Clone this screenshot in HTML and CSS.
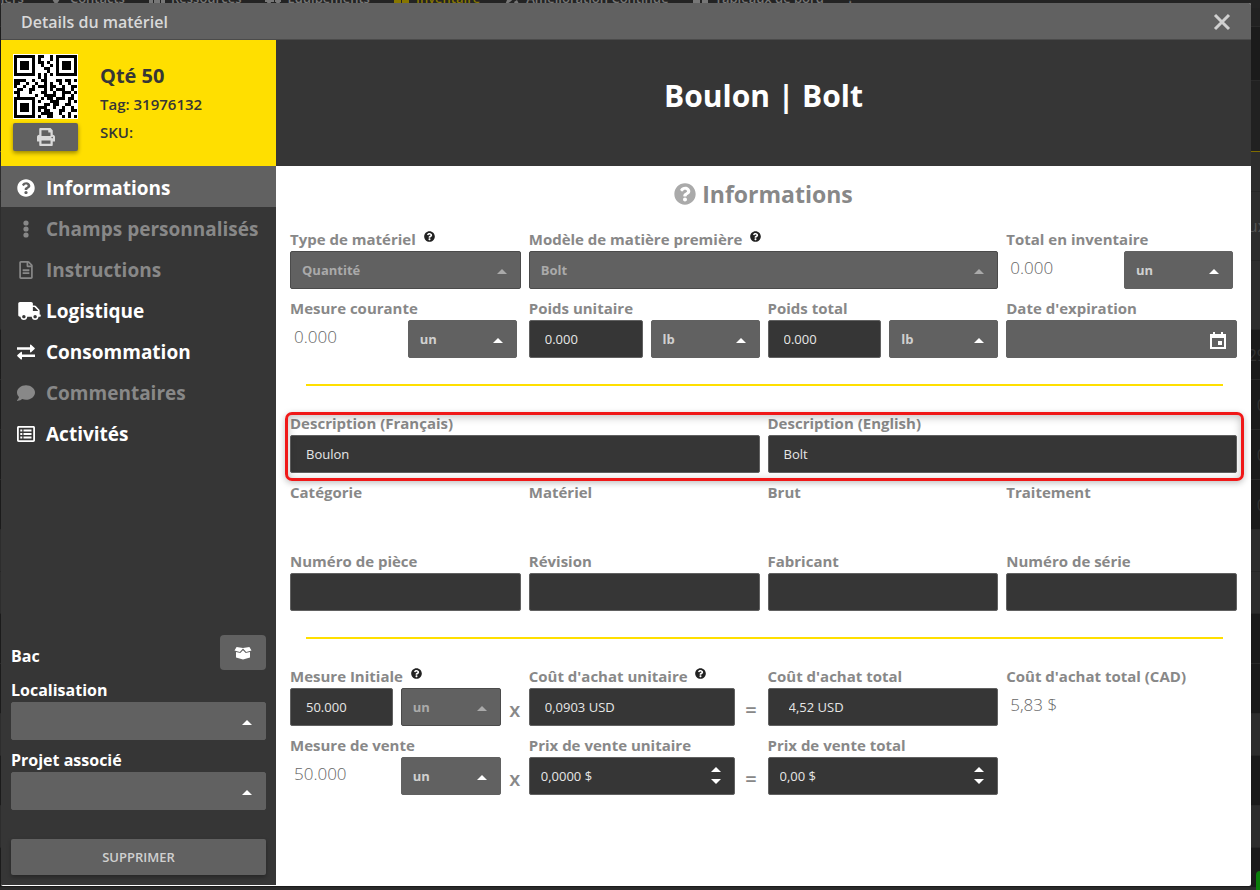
FILE: index.html
```html
<!DOCTYPE html>
<html lang="fr">

<head>
    <meta charset="UTF-8">
    <meta name="viewport" content="width=device-width, initial-scale=1.0">
    <title>Details du matériel</title>
    <link rel="stylesheet" href="styles.css">
</head>

<body>
    <!-- shared icons -->
    <svg class="sprite" aria-hidden="true">
        <symbol id="i-help" viewBox="0 0 512 512">
            <path d="M504 256c0 136.997-111.043 248-248 248S8 392.997 8 256C8 119.083 119.043 8 256 8s248 111.083 248 248zM262.655 90c-54.497 0-89.255 22.957-116.549 63.758-3.536 5.286-2.353 12.415 2.715 16.258l34.699 26.31c5.205 3.947 12.621 3.008 16.665-2.122 17.864-22.658 30.113-35.797 57.303-35.797 20.429 0 45.698 13.148 45.698 32.958 0 14.976-12.363 22.667-32.534 33.976C247.128 238.528 216 254.941 216 296v4c0 6.627 5.373 12 12 12h56c6.627 0 12-5.373 12-12v-1.333c0-28.462 83.186-29.647 83.186-106.667 0-58.002-60.165-102-116.531-102zM256 338c-25.365 0-46 20.635-46 46 0 25.364 20.635 46 46 46s46-20.636 46-46c0-25.365-20.635-46-46-46z" />
        </symbol>
        <symbol id="i-print" viewBox="0 0 512 512">
            <path d="M448 192V77.25c0-8.49-3.37-16.62-9.37-22.63L393.37 9.37c-6-6-14.14-9.37-22.63-9.37H96C78.33 0 64 14.33 64 32v160c-35.35 0-64 28.65-64 64v112c0 8.84 7.16 16 16 16h48v96c0 17.67 14.33 32 32 32h320c17.67 0 32-14.33 32-32v-96h48c8.84 0 16-7.16 16-16V256c0-35.35-28.65-64-64-64zm-64 256H128v-96h256v96zm0-224H128V64h192v48c0 8.84 7.16 16 16 16h48v96zm48 72c-13.25 0-24-10.75-24-24 0-13.26 10.75-24 24-24s24 10.74 24 24c0 13.25-10.75 24-24 24z" />
        </symbol>
    </svg>

    <div class="page" aria-hidden="true">
        <div class="topnav">
            <span>Ateliers</span>
            <span><svg viewBox="0 0 16 14"><path d="M3 4a5 5 0 0 1 10 0c0 4-5 10-5 10S3 8 3 4z" /></svg>Contacts</span>
            <span><svg viewBox="0 0 16 14"><circle cx="8" cy="4" r="3" /><circle cx="3" cy="6" r="2" /><circle cx="13" cy="6" r="2" /><path d="M0 14V9h4v5zM5 14V8h6v6zM12 14V9h4v5z" /></svg>Ressources</span>
            <span><svg viewBox="0 0 16 14"><path d="M0 3h9v8H0zM10 6h4l2 3v2h-6z" /><circle cx="4" cy="12" r="2" /><circle cx="13" cy="12" r="2" /></svg>Équipements</span>
            <span class="current"><svg viewBox="0 0 16 14"><path d="M4 0h8v6H4zM0 7h7v7H0zM8 7h7v7H8z" /></svg>Inventaire</span>
            <span><svg viewBox="0 0 16 14"><path d="M12 0l3 3-9 8-5 3 2-5zM10 11l3-2 2 4h-4z" /></svg>Amélioration Continue</span>
            <span><svg viewBox="0 0 16 14"><path d="M0 7h7v7H0zM9 4h6v10H9zM0 1h7v4H0z" /></svg>Tableaux de bord</span>
            <span>?</span>
        </div>
        <div class="band h19"></div>
        <div class="band dark h54"></div>
        <div class="band h71 yellow-line"></div>
        <div class="band light h40"></div>
        <div class="band light h69">ux</div>
        <div class="band light h69"></div>
        <div class="band dark h50">29</div>
        <div class="band dark h50">0</div>
        <div class="band dark h50">0</div>
        <div class="band dark h50">0</div>
        <div class="band light h42"></div>
        <div class="band light h42"></div>
        <div class="band dark h50"></div>
        <div class="band dark h50"></div>
        <div class="band light h42"></div>
        <div class="band dark h50"></div>
        <div class="band light h42"></div>
        <div class="band dark h40"></div>
        <div class="badge"></div>
    </div>

    <div class="modal" role="dialog" aria-labelledby="modalTitle">
        <header class="modal-header">
            <span id="modalTitle">Details du matériel</span>
            <button class="close" type="button" aria-label="Fermer">
                <svg viewBox="0 0 18 18"><path d="M2 2l14 14M16 2L2 16" /></svg>
            </button>
        </header>

        <div class="modal-body">
            <aside class="sidebar">
                <div class="summary">
                    <div class="code">
                        <svg class="qr" viewBox="-0.333 -0.333 21.666 21.666" role="img" aria-label="QR 31976132" shape-rendering="crispEdges">
                            <path class="qr-bg" d="M-1-1h23v23h-23z" />
                            <!-- finders -->
                            <path fill-rule="evenodd" d="M0 0h7v7H0zM1 1v5h5V1zM2 2h3v3H2zM14 0h7v7h-7zM15 1v5h5V1zM16 2h3v3h-3zM0 14h7v7H0zM1 15v5h5v-5zM2 16h3v3H2z" />
                            <path class="qr-rows" d="M8 .5h2m2 0h1M8 1.5h1m3 0h1M8 2.5h2m1 0h1M9 3.5h1m2 0h1M10 4.5h2M11 5.5h1M8 6.5h1m1 0h1m1 0h1M8 7.5h1m1 0h1
                            M0 8.5h4m2 0h1m2 0h2m3 0h2m1 0h2m1 0h1M0 9.5h2m2 0h1m2 0h1m2 0h1m1 0h1m2 0h1m2 0h1M0 10.5h1m2 0h1m2 0h1m1 0h3m1 0h2m2 0h1m2 0h2
                            M1 11.5h2m2 0h2m3 0h1m1 0h1m1 0h3m2 0h1M0 12.5h2m3 0h1m3 0h2m2 0h1m2 0h3m1 0h1M1 13.5h1m5 0h1m2 0h4m2 0h1m2 0h1
                            M9 14.5h1m1 0h2m1 0h3m1 0h2M8 15.5h1m3 0h3m3 0h1m1 0h1M10 16.5h2m1 0h2m2 0h2M8 17.5h3m2 0h1m2 0h1m2 0h1M8 18.5h1m1 0h2m3 0h2m2 0h2
                            M9 19.5h4m2 0h1m2 0h1M8 20.5h1m2 0h2m3 0h1m1 0h1m1 0h1" />
                        </svg>
                        <button class="print" type="button" aria-label="Imprimer"><svg><use href="#i-print" /></svg></button>
                    </div>
                    <div class="summary-text">
                        <strong>Qté 50</strong>
                        <span>Tag: 31976132</span>
                        <span>SKU:</span>
                    </div>
                </div>

                <nav class="menu">
                    <a class="active" href="#informations"><svg><use href="#i-help" /></svg>Informations</a>
                    <a class="muted" href="#champs"><svg viewBox="0 0 18 18"><circle cx="9" cy="3" r="2.6" /><circle cx="9" cy="9" r="2.6" /><circle cx="9" cy="15" r="2.6" /></svg>Champs personnalisés</a>
                    <a class="muted" href="#instructions"><svg viewBox="-64 0 512 512"><path d="M288 248v28c0 6.600-5.400 12-12 12H108c-6.600 0-12-5.400-12-12v-28c0-6.600 5.400-12 12-12h168c6.600 0 12 5.400 12 12zm-12 72H108c-6.600 0-12 5.400-12 12v28c0 6.600 5.400 12 12 12h168c6.600 0 12-5.400 12-12v-28c0-6.600-5.400-12-12-12zm108-188.100V464c0 26.500-21.500 48-48 48H48c-26.500 0-48-21.500-48-48V48C0 21.500 21.500 0 48 0h204.100C264.800 0 277 5.100 286 14.100L369.900 98c9 8.900 14.100 21.200 14.100 33.900zm-128-80V128h76.100L256 51.900zM336 464V176H232c-13.300 0-24-10.700-24-24V48H48v416h288z" /></svg>Instructions</a>
                    <a href="#logistique"><svg class="wide" viewBox="0 0 640 512"><path d="M624 352h-16V243.900c0-12.700-5.100-24.900-14.100-33.900L494 110.100c-9-9-21.200-14.100-33.900-14.100H416V48c0-26.500-21.500-48-48-48H48C21.500 0 0 21.500 0 48v320c0 26.500 21.500 48 48 48h16c0 53 43 96 96 96s96-43 96-96h128c0 53 43 96 96 96s96-43 96-96h48c8.800 0 16-7.200 16-16v-32c0-8.800-7.200-16-16-16zM160 464c-26.500 0-48-21.500-48-48s21.500-48 48-48 48 21.500 48 48-21.500 48-48 48zm320 0c-26.500 0-48-21.500-48-48s21.500-48 48-48 48 21.500 48 48-21.500 48-48 48zm80-208H416V144h44.100l99.900 99.900V256z" /></svg>Logistique</a>
                    <a href="#consommation"><svg viewBox="0 0 18 18"><path d="M0 4.200h13V2.300c0-.6.700-.9 1.100-.5l3.500 3.100c.4.400.4.900 0 1.200l-3.500 3.100c-.4.400-1.100.1-1.100-.5V6.700H0zM18 11.400H5V9.500c0-.6-.7-.9-1.100-.5L.4 12.100c-.4.400-.4.900 0 1.200l3.500 3.100c.4.400 1.100.1 1.100-.5v-2h13z" /></svg>Consommation</a>
                    <a class="muted" href="#commentaires"><svg viewBox="0 0 512 512"><path d="M256 32C114.600 32 0 125.100 0 240c0 49.600 21.400 95 57 130.700C44.500 421.100 2.700 466 2.200 466.500c-2.200 2.300-2.800 5.700-1.500 8.700S4.800 480 8 480c66.300 0 116-31.800 140.600-51.400 32.700 12.300 69 19.400 107.400 19.400 141.400 0 256-93.100 256-208S397.400 32 256 32z" /></svg>Commentaires</a>
                    <a href="#activites"><svg viewBox="0 0 18 18"><path fill-rule="evenodd" d="M1.700 1h14.600c1 0 1.700.7 1.700 1.700v12.600c0 1-.7 1.700-1.700 1.700H1.700C.7 17 0 16.300 0 15.300V2.700C0 1.700.7 1 1.700 1zM1.800 2.800v12.400h14.400V2.800zM3.300 4.500h2v2h-2zM6.500 4.500h8v2h-8zM3.300 8h2v2h-2zM6.500 8h8v2h-8zM3.300 11.500h2v2h-2zM6.500 11.500h8v2h-8z" /></svg>Activités</a>
                </nav>

                <div class="location">
                    <div class="bin">
                        <span>Bac</span>
                        <button type="button" aria-label="Choisir un bac">
                            <svg viewBox="0 0 18 14"><path d="M2.600 1L9 2l6.400-1L17.500 4.500 12.200 6 9 2.600 5.800 6 .5 4.500zM2 6l4.300 1.100L9 4.300l2.700 2.800L16 6v5.400L9 13.500 2 11.400z" /></svg>
                        </button>
                    </div>
                    <label for="localisation">Localisation</label>
                    <div class="select"><select id="localisation"><option></option></select></div>
                    <label for="projet">Projet associé</label>
                    <div class="select"><select id="projet"><option></option></select></div>
                    <button class="delete" type="button">SUPPRIMER</button>
                </div>
            </aside>

            <main class="content">
                <div class="banner">
                    <h1>Boulon | Bolt</h1>
                </div>
                <h2><svg><use href="#i-help" /></svg>Informations</h2>

                <form class="form">
                    <div class="grid">
                        <div class="field">
                            <label for="type">Type de matériel <svg class="hint"><use href="#i-help" /></svg></label>
                            <div class="select"><select id="type" disabled><option>Quantité</option></select></div>
                        </div>
                        <div class="field span2">
                            <label for="modele">Modèle de matière première <svg class="hint"><use href="#i-help" /></svg></label>
                            <div class="select"><select id="modele" disabled><option>Bolt</option></select></div>
                        </div>
                        <div class="field">
                            <label for="totalUnit">Total en inventaire</label>
                            <div class="pair inset">
                                <span class="value">0.000</span>
                                <div class="select"><select id="totalUnit"><option>un</option></select></div>
                            </div>
                        </div>

                        <div class="field">
                            <label for="courantUnit">Mesure courante</label>
                            <div class="pair inset">
                                <span class="value">0.000</span>
                                <div class="select"><select id="courantUnit"><option>un</option></select></div>
                            </div>
                        </div>
                        <div class="field">
                            <label for="poids">Poids unitaire</label>
                            <div class="pair">
                                <input id="poids" type="text" value="0.000">
                                <div class="select"><select aria-label="Unité du poids"><option>lb</option></select></div>
                            </div>
                        </div>
                        <div class="field">
                            <label for="poidsTotal">Poids total</label>
                            <div class="pair">
                                <input id="poidsTotal" type="text" value="0.000">
                                <div class="select"><select aria-label="Unité du poids total"><option>lb</option></select></div>
                            </div>
                        </div>
                        <div class="field">
                            <label for="expiration">Date d'expiration</label>
                            <div class="date">
                                <input id="expiration" type="text">
                                <svg viewBox="0 0 16 17"><path fill-rule="evenodd" d="M3 0h2v2h6V0h2v2h3v15H0V2h3zM2 6v9h12V6zM8 9h4v4H8z" /></svg>
                            </div>
                        </div>
                    </div>

                    <hr>

                    <div class="grid">
                        <div class="highlight">
                            <div class="field">
                                <label for="descFr">Description (Français)</label>
                                <input id="descFr" type="text" value="Boulon">
                            </div>
                            <div class="field">
                                <label for="descEn">Description (English)</label>
                                <input id="descEn" type="text" value="Bolt">
                            </div>
                        </div>

                        <div class="field empty"><span>Catégorie</span></div>
                        <div class="field empty"><span>Matériel</span></div>
                        <div class="field empty"><span>Brut</span></div>
                        <div class="field empty"><span>Traitement</span></div>

                        <div class="field">
                            <label for="piece">Numéro de pièce</label>
                            <input id="piece" type="text">
                        </div>
                        <div class="field">
                            <label for="revision">Révision</label>
                            <input id="revision" type="text">
                        </div>
                        <div class="field">
                            <label for="fabricant">Fabricant</label>
                            <input id="fabricant" type="text">
                        </div>
                        <div class="field">
                            <label for="serie">Numéro de série</label>
                            <input id="serie" type="text">
                        </div>
                    </div>

                    <hr>

                    <div class="grid">
                        <div class="field">
                            <label for="initiale">Mesure Initiale <svg class="hint"><use href="#i-help" /></svg></label>
                            <div class="pair short">
                                <input id="initiale" type="text" value="50.000">
                                <div class="select"><select aria-label="Unité initiale" disabled><option>un</option></select></div>
                                <span class="times">x</span>
                            </div>
                        </div>
                        <div class="field">
                            <label for="achat">Coût d'achat unitaire <svg class="hint"><use href="#i-help" /></svg></label>
                            <div class="pair">
                                <input id="achat" type="text" value="0,0903 USD">
                                <span class="equals">=</span>
                            </div>
                        </div>
                        <div class="field">
                            <label for="achatTotal">Coût d'achat total</label>
                            <input id="achatTotal" class="indent" type="text" value="4,52 USD">
                        </div>
                        <div class="field">
                            <span>Coût d'achat total (CAD)</span>
                            <span class="value">5,83 $</span>
                        </div>

                        <div class="field">
                            <label for="venteUnit">Mesure de vente</label>
                            <div class="pair short">
                                <span class="value">50.000</span>
                                <div class="select"><select id="venteUnit"><option>un</option></select></div>
                                <span class="times">x</span>
                            </div>
                        </div>
                        <div class="field">
                            <label for="vente">Prix de vente unitaire</label>
                            <div class="pair">
                                <div class="spin"><input id="vente" type="text" value="0,0000 $"></div>
                                <span class="equals">=</span>
                            </div>
                        </div>
                        <div class="field">
                            <label for="venteTotal">Prix de vente total</label>
                            <div class="spin"><input id="venteTotal" type="text" value="0,00 $"></div>
                        </div>
                    </div>
                </form>
            </main>
        </div>
    </div>
</body>

</html>
```
FILE: styles.css
```css
* {
    box-sizing: border-box;
}

body {
    margin: 0;
    background-color: #2b2b2b;
    color: #888;
    font-family: "Open Sans", "Noto Sans", sans-serif;
    font-size: 15px;
}

button,
input,
select {
    font-family: inherit;
    margin: 0;
}

svg {
    fill: currentColor;
    flex: none;
}

.sprite {
    display: none;
}

/* page behind the dialog */
.page {
    position: fixed;
    inset: 0;
    overflow: hidden;
}

.topnav {
    display: flex;
    gap: 24px;
    height: 20px;
    margin-top: -12px;
    margin-left: -24px;
    line-height: 20px;
    font-size: 13px;
    font-weight: 600;
    white-space: nowrap;
    background-color: #232323;
    color: #777;
}

.topnav span {
    display: flex;
    align-items: center;
    gap: 6px;
}

.topnav svg {
    width: 16px;
    height: 14px;
}

.topnav .current {
    color: #877600;
}

.band {
    display: flex;
    align-items: center;
    justify-content: flex-end;
    margin-right: -6px;
    background-color: #212121;
    border-bottom: 1px solid #292929;
    color: #333;
    font-size: 16px;
}

.band.dark {
    background-color: #1b1b1b;
}

.band.light {
    background-color: #2d2d2d;
    border-color: #262626;
    color: #555;
}

.band.yellow-line {
    border-color: #806d00;
}

.h19 { height: 19px; }
.h40 { height: 40px; }
.h42 { height: 42px; }
.h50 { height: 50px; }
.h54 { height: 54px; }
.h69 { height: 69px; }
.h71 { height: 71px; }

.badge {
    position: absolute;
    right: 0;
    bottom: 0;
    width: 4px;
    height: 19px;
    border-radius: 4px 0 0 0;
    background-color: #0a7d0a;
}

/* dialog */
.modal {
    position: fixed;
    inset: 3px 9px 4px 1px;
    display: flex;
    flex-direction: column;
    background-color: #fff;
    border-radius: 2px;
    overflow: hidden;
}

.modal-header {
    display: flex;
    align-items: center;
    justify-content: space-between;
    height: 37px;
    padding: 2px 20px 0;
    background-color: #616161;
    border-bottom: 1px solid #4b4b4b;
    color: #d9d9d9;
    font-size: 16px;
    font-weight: 600;
}

.close {
    display: flex;
    padding: 0;
    border: 0;
    background: none;
    color: #d0d0d0;
}

.close svg {
    width: 18px;
    height: 18px;
    stroke: currentColor;
    stroke-width: 3;
}

.modal-body {
    flex: 1;
    display: flex;
    min-height: 0;
}

/* sidebar */
.sidebar {
    display: flex;
    flex-direction: column;
    width: 22%;
    margin-bottom: 1px;
    background-color: #363636;
    color: #fff;
}

.summary {
    display: flex;
    gap: 22px;
    height: 126px;
    padding: 14px 12px;
    background-color: #ffdf00;
    color: #363636;
}

.code {
    display: flex;
    flex-direction: column;
    gap: 4px;
    width: 65px;
}

.qr {
    width: 65px;
    height: 65px;
    fill: #000;
}

.qr-bg {
    fill: #fff;
}

.qr-rows {
    stroke: #000;
    stroke-width: 1;
    fill: none;
}

.print {
    display: flex;
    align-items: center;
    justify-content: center;
    height: 28px;
    padding: 0;
    border: 0;
    border-radius: 2px;
    background-color: #616161;
    color: #d9d9d9;
    box-shadow: 0 2px 4px rgba(0, 0, 0, 0.4);
}

.print svg {
    width: 18px;
    height: 18px;
}

.summary-text {
    display: flex;
    flex-direction: column;
    padding-top: 8px;
    font-size: 15px;
    font-weight: 600;
    line-height: 28px;
}

.summary-text strong {
    font-size: 20px;
    font-weight: 700;
    line-height: 28px;
}

.menu a {
    display: flex;
    align-items: center;
    gap: 11px;
    height: 41px;
    padding: 2px 0 0 16px;
    color: #fff;
    font-size: 19px;
    font-weight: 700;
    text-decoration: none;
    white-space: nowrap;
}

.menu a.muted {
    color: #888;
}

.menu a.active {
    background-color: #616161;
}

.menu svg {
    width: 18px;
    height: 18px;
}

.menu svg.wide {
    width: 23px;
    margin: 0 -6px 0 1px;
}

.location {
    display: flex;
    flex-direction: column;
    margin-top: auto;
    padding: 0 10px 10px;
    font-size: 16px;
    font-weight: 700;
}

.location label {
    height: 23px;
    margin-top: 9px;
    line-height: 22px;
}

.bin {
    display: flex;
    align-items: center;
    justify-content: space-between;
    line-height: 22px;
}

.bin span {
    padding-top: 6px;
}

.bin button {
    display: flex;
    align-items: center;
    justify-content: center;
    width: 46px;
    height: 35px;
    border: 0;
    border-radius: 4px;
    background-color: #616161;
    color: #fff;
}

.bin button svg {
    width: 18px;
    height: 14px;
}

.delete {
    height: 36px;
    margin-top: 29px;
    border: 0;
    border-radius: 2px;
    background-color: #616161;
    color: #d0d0d0;
    font-size: 13px;
    font-weight: 600;
    box-shadow: 0 2px 4px rgba(0, 0, 0, 0.3);
}

/* content */
.content {
    flex: 1;
    min-width: 0;
}

.banner {
    display: flex;
    align-items: center;
    justify-content: center;
    height: 126px;
    padding-bottom: 16px;
    background-color: #363636;
    color: #fff;
}

h1 {
    margin: 0;
    font-size: 30px;
    font-weight: 700;
}

h2 {
    display: flex;
    align-items: center;
    justify-content: center;
    gap: 6px;
    height: 56px;
    margin: 0 0 6px;
    font-size: 23px;
    font-weight: 700;
}

h2 svg {
    width: 22px;
    height: 22px;
    color: #aaa;
}

.form {
    padding: 0 14px;
}

.grid,
.highlight {
    display: grid;
    grid-template-columns: repeat(4, minmax(0, 1fr));
    gap: 8px;
}

.span2 {
    grid-column: span 2;
}

.field {
    display: flex;
    flex-direction: column;
    min-width: 0;
}

.field>label,
.field>span:first-child {
    height: 23px;
    line-height: 23px;
    font-weight: 700;
    white-space: nowrap;
}

.field.empty {
    height: 61px;
}

.hint {
    width: 11px;
    height: 11px;
    margin: 0 0 3px 4px;
    color: #222;
}

input,
select {
    width: 100%;
    min-width: 0;
    height: 38px;
    border: 1px solid #616161;
    border-radius: 2px;
    outline: none;
    font-size: 13px;
}

input {
    padding: 0 15px;
    background-color: #363636;
    color: #e6e6e6;
}

select {
    appearance: none;
    padding: 0 28px 0 11px;
    background-color: #616161;
    color: #d0d0d0;
    font-weight: 700;
}

select:disabled {
    border-color: #4b4b4b;
    color: #aaa;
    opacity: 1;
}

.select,
.spin,
.date {
    position: relative;
}

.select::after,
.spin::before,
.spin::after {
    content: '';
    position: absolute;
    right: 14px;
    top: 18px;
    border: 5px solid transparent;
    border-top: 0;
    border-bottom-color: #fff;
    pointer-events: none;
}

.select:has(:disabled)::after {
    border-bottom-color: #aaa;
}

.spin::before {
    top: 10px;
}

.spin::after {
    top: 22px;
    transform: scaleY(-1);
}

.spin {
    flex: 1;
}

.spin input,
.field .date input {
    padding: 0 11px;
}

.date input {
    background-color: #616161;
}

.date svg {
    position: absolute;
    right: 11px;
    top: 12px;
    width: 16px;
    height: 17px;
    color: #fff;
}

.indent {
    padding-left: 20px;
}

.pair {
    display: flex;
    gap: 8px;
}

.pair>* {
    flex: 1;
}

.pair .select {
    flex: 0 0 109px;
}

.pair.short .select {
    flex-basis: 100px;
}

.pair.inset {
    padding-right: 4px;
}

.value {
    padding-left: 4px;
    color: #666;
    line-height: 34px;
    font-size: 17px;
    font-weight: 300;
}

.pair .times,
.pair .equals {
    flex: none;
    width: 12px;
    padding-top: 7px;
    font-size: 20px;
    font-weight: 600;
    line-height: 30px;
    text-align: center;
}

.pair .equals {
    width: 17px;
}

hr {
    height: 2px;
    margin: 26px 14px 26px 16px;
    border: 0;
    background-color: #ffdf00;
}

/* red frame round the description pair */
.highlight {
    position: relative;
    grid-column: 1 / -1;
    grid-template-columns: repeat(2, minmax(0, 1fr));
}

.highlight::after {
    content: '';
    position: absolute;
    inset: 0 -7px -8px -5px;
    border: 3px solid #f01818;
    border-radius: 7px;
    box-shadow: 0 2px 6px rgba(0, 0, 0, 0.25), inset 0 2px 8px rgba(0, 0, 0, 0.25);
    pointer-events: none;
}
```
